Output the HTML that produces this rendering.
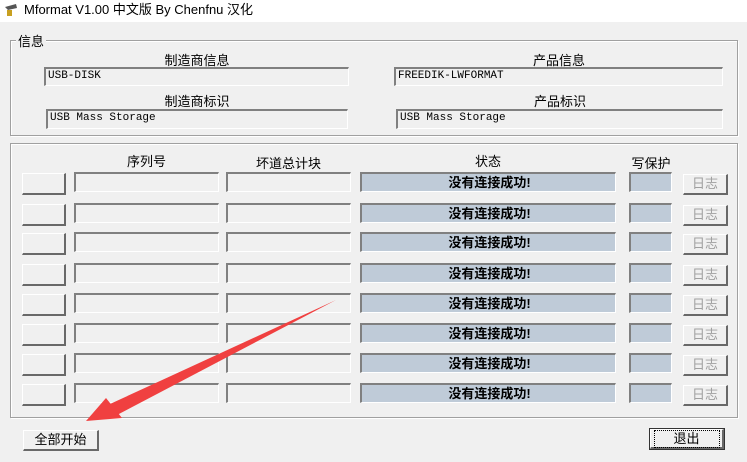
<!DOCTYPE html>
<html><head><meta charset="utf-8"><style>
*{margin:0;padding:0;box-sizing:border-box}
body{width:747px;height:462px;background:#f0f0f0;position:relative;overflow:hidden;font-family:"Liberation Sans","Noto Sans CJK SC",sans-serif;font-size:12px;color:#000}
.a{position:absolute}
.title{left:0;top:0;width:747px;height:22px;background:#fff}
.grp{border:1px solid #a0a0a0;box-shadow:inset 1px 1px 0 #fff,1px 1px 0 #fff}
.sunk{border-top:2px solid #808080;border-left:2px solid #808080;border-bottom:1px solid #fff;border-right:1px solid #fff;background:#f0f0f0;font-family:"Liberation Mono","Noto Serif CJK SC",monospace;font-size:11px;padding-left:2px;line-height:15px}
.btn{border:1px solid #fff;border-right:2px solid #696969;border-bottom:2px solid #696969;background:#f0f0f0;text-align:center}
.lbl{text-align:center;font-size:13px}
.log{color:#a0a0a0;font-size:13px;line-height:17px}
</style></head><body>
<div class="a title"></div>
<svg class="a" style="left:4px;top:3px" width="14" height="14"><path d="M1 4 L12 1 L13 5 L4 7 Z" fill="#555"/><rect x="3" y="7" width="5" height="6" fill="#c8a020"/></svg>
<div class="a" style="left:24px;top:2px;font-size:13px;line-height:16px">Mformat V1.00 中文版 By Chenfnu 汉化</div>

<div class="a grp" style="left:10px;top:40px;width:728px;height:96px"></div>
<div class="a" style="left:16px;top:31px;background:#f0f0f0;padding:0 2px;font-size:13px">信息</div>
<div class="a lbl" style="left:45px;top:50px;width:304px">制造商信息</div>
<div class="a sunk" style="left:44px;top:67px;width:305px;height:19px">USB-DISK</div>
<div class="a lbl" style="left:45px;top:91px;width:304px">制造商标识</div>
<div class="a sunk" style="left:46px;top:109px;width:302px;height:20px">USB Mass Storage</div>
<div class="a lbl" style="left:395px;top:50px;width:328px">产品信息</div>
<div class="a sunk" style="left:394px;top:67px;width:329px;height:19px">FREEDIK-LWFORMAT</div>
<div class="a lbl" style="left:397px;top:91px;width:326px">产品标识</div>
<div class="a sunk" style="left:396px;top:109px;width:327px;height:20px">USB Mass Storage</div>

<div class="a grp" style="left:10px;top:143px;width:728px;height:275px"></div>
<div class="a lbl" style="left:74px;top:151px;width:145px">序列号</div>
<div class="a lbl" style="left:226px;top:153px;width:125px">坏道总计块</div>
<div class="a lbl" style="left:360px;top:151px;width:256px">状态</div>
<div class="a lbl" style="left:625px;top:153px;width:52px">写保护</div>

<div id="rows"></div>
<script>
var tops=[172,203,232,263,293,323,353,383],h='';
tops.forEach(function(t){
h+='<div class="a btn" style="left:22px;top:'+(t+1)+'px;width:44px;height:22px"></div>';
h+='<div class="a sunk" style="left:74px;top:'+t+'px;width:145px;height:20px"></div>';
h+='<div class="a sunk" style="left:226px;top:'+t+'px;width:125px;height:20px"></div>';
h+='<div class="a sunk" style="left:360px;top:'+t+'px;width:256px;height:20px;background:#bfcbd8;text-align:center;font-family:\'Liberation Sans\',\'Noto Sans CJK SC\',sans-serif;font-size:13px;font-weight:bold;line-height:18px">没有连接成功!</div>';
h+='<div class="a sunk" style="left:629px;top:'+t+'px;width:43px;height:20px;background:#bfcbd8"></div>';
h+='<div class="a btn log" style="left:683px;top:'+(t+2)+'px;width:45px;height:21px">日志</div>';
});
document.getElementById('rows').innerHTML=h;
</script>

<div class="a btn" style="left:23px;top:430px;width:76px;height:21px;font-size:13px;line-height:18px">全部开始</div>
<div class="a" style="left:649px;top:428px;width:76px;height:22px;border:1px solid #333;background:#f0f0f0"><div class="a btn" style="left:0;top:0;width:74px;height:20px;font-size:13px;line-height:16px"><span style="display:inline-block;outline:1px dotted #000;width:64px;margin-top:1px">退出</span></div></div>

<svg class="a" style="left:0;top:0" width="747" height="462"><polygon points="336,300 110,404 117,415" fill="#f04040"/><polygon points="86,421 106,398 122,418" fill="#f04040"/></svg>
</body></html>
